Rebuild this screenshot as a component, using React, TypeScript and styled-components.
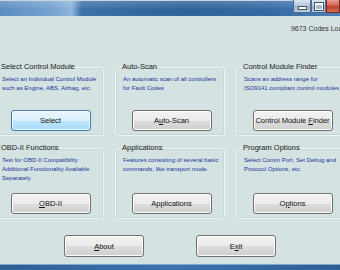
import React from 'react';
import styled, { createGlobalStyle } from 'styled-components';

const GlobalStyle = createGlobalStyle`
  html, body {
    margin: 0;
    padding: 0;
    background: #d4e2e2;
  }
  body {
    font-family: "Liberation Sans", Arial, sans-serif;
  }
`;

const Window = styled.div`
  width: 340px;
  height: 270px;
  overflow: hidden;
  display: flex;
  flex-direction: column;
  background: #d4e2e2;
`;

const TitleBar = styled.div`
  height: 16px;
  flex: none;
  display: flex;
  justify-content: flex-end;
  align-items: flex-start;
  border-top: 1px solid #c9d6e2;
  box-sizing: border-box;
  background:
    linear-gradient(180deg, rgba(255, 255, 255, 0.18) 0, rgba(255, 255, 255, 0) 60%),
    linear-gradient(90deg, #5b8cc0 0, #77a4d2 16%, #8fb6dc 21%, #3c70a8 24%, #2c6199 55%, #356ba5 80%, #4a7fb8 100%);
`;

const CaptionButtons = styled.div`
  display: flex;
  height: 13px;
  margin-top: -1px;
`;

const CaptionButton = styled.div<{ $w: number; $close?: boolean }>`
  width: ${(p) => p.$w}px;
  height: 13px;
  box-sizing: border-box;
  border: 1px solid ${(p) => (p.$close ? '#7a2a20' : '#4e6d8e')};
  border-top: none;
  display: flex;
  align-items: center;
  justify-content: center;
  background: ${(p) =>
    p.$close
      ? 'linear-gradient(180deg, #e8a293 0, #d4624e 45%, #c0402c 55%, #d06c50 100%)'
      : 'linear-gradient(180deg, #d9e4ef 0, #b7c9dc 45%, #9db3cb 55%, #b9cde0 100%)'};
`;

const MinGlyph = styled.div`
  width: 7px;
  height: 2px;
  margin-top: 3px;
  background: #fff;
  border: 1px solid #41546a;
`;

const MaxGlyph = styled.div`
  width: 6px;
  height: 4px;
  border: 1px solid #fff;
  border-top-width: 2px;
  outline: 1px solid #41546a;
`;

const StatusRow = styled.div`
  display: flex;
  justify-content: flex-end;
  padding-top: 8px;
  height: 10px;
`;

const StatusText = styled.span`
  font-size: 7px;
  line-height: 10px;
  color: #333;
  white-space: nowrap;
  margin-right: -14px;
`;

const Grid = styled.div`
  display: grid;
  grid-template-columns: repeat(3, 110px);
  grid-template-rows: 74px 76px;
  column-gap: 11px;
  row-gap: 7px;
  margin-top: 28px;
  margin-left: -6px;
`;

const GroupBox = styled.fieldset`
  margin: 0;
  padding: 3px 4px 4px 7px;
  min-width: 0;
  border: 1px solid #edf4f4;
  border-radius: 3px;
  box-shadow: inset 0 0 0 1px rgba(160, 180, 185, 0.25);
  display: flex;
  flex-direction: column;
  align-items: center;
`;

const Legend = styled.legend`
  font-size: 7.5px;
  line-height: 10px;
  color: #222;
  padding: 0 1px;
  margin-left: -2px;
  white-space: nowrap;
`;

const Desc = styled.div`
  align-self: stretch;
  font-size: 6px;
  line-height: 9px;
  color: #22329a;
`;

const Button = styled.button<{ $focused?: boolean }>`
  width: 80px;
  height: 21px;
  flex: none;
  margin-top: auto;
  padding: 0;
  font-family: "Liberation Sans", Arial, sans-serif;
  font-size: 7.5px;
  color: #111;
  border-radius: 3px;
  border: 1px solid ${(p) => (p.$focused ? '#3c7fb1' : '#707070')};
  box-shadow: inset 0 0 0 1px ${(p) => (p.$focused ? 'rgba(255,255,255,0.7)' : '#fcfcfc')};
  background: ${(p) =>
    p.$focused
      ? 'linear-gradient(180deg, #eaf6fd 0, #d9f0fc 50%, #bee6fd 50%, #a7d9f5 100%)'
      : 'linear-gradient(180deg, #f2f2f2 0, #ebebeb 50%, #dddddd 50%, #cfcfcf 100%)'};
  cursor: default;
`;

const BottomRow = styled.div`
  display: flex;
  justify-content: center;
  gap: 52px;
  margin-top: 16px;
`;

const BottomButton = styled(Button)`
  height: 22px;
  margin-top: 0;
`;

const TaskStrip = styled.div`
  margin-top: auto;
  height: 5px;
  flex: none;
  border-top: 1px solid #7fa6cc;
  background: linear-gradient(90deg, #2d5f95 0, #3d74ad 50%, #2d5f95 100%);
`;

type Group = {
  title: string;
  desc: string;
  button: React.ReactNode;
  focused?: boolean;
};

const groups: Group[] = [
  {
    title: 'Select Control Module',
    desc: 'Select an Individual Control Module such as Engine, ABS, Airbag, etc.',
    button: 'Select',
    focused: true,
  },
  {
    title: 'Auto-Scan',
    desc: 'An automatic scan of all controllers for Fault Codes',
    button: (
      <>
        A<u>u</u>to-Scan
      </>
    ),
  },
  {
    title: 'Control Module Finder',
    desc: 'Scans an address range for ISO9141 compliant control modules',
    button: (
      <>
        Control Module <u>F</u>inder
      </>
    ),
  },
  {
    title: 'OBD-II Functions',
    desc: 'Test for OBD-II Compatibility Additional Functionality Available Separately',
    button: (
      <>
        <u>O</u>BD-II
      </>
    ),
  },
  {
    title: 'Applications',
    desc: 'Features consisting of several basic commands, like transport mode.',
    button: 'Applications',
  },
  {
    title: 'Program Options',
    desc: 'Select Comm Port, Set Debug and Protocol Options, etc.',
    button: (
      <>
        O<u>p</u>tions
      </>
    ),
  },
];

const App: React.FC = () => {
  return (
    <>
      <GlobalStyle />
      <Window>
        <TitleBar>
          <CaptionButtons>
            <CaptionButton $w={18}>
              <MinGlyph />
            </CaptionButton>
            <CaptionButton $w={15}>
              <MaxGlyph />
            </CaptionButton>
            <CaptionButton $w={14} $close />
          </CaptionButtons>
        </TitleBar>

        <StatusRow>
          <StatusText>9673 Codes Loaded</StatusText>
        </StatusRow>

        <Grid>
          {groups.map((g) => (
            <GroupBox key={g.title}>
              <Legend>{g.title}</Legend>
              <Desc>{g.desc}</Desc>
              <Button $focused={g.focused}>{g.button}</Button>
            </GroupBox>
          ))}
        </Grid>

        <BottomRow>
          <BottomButton>
            <u>A</u>bout
          </BottomButton>
          <BottomButton>
            E<u>x</u>it
          </BottomButton>
        </BottomRow>

        <TaskStrip />
      </Window>
    </>
  );
};

export default App;
